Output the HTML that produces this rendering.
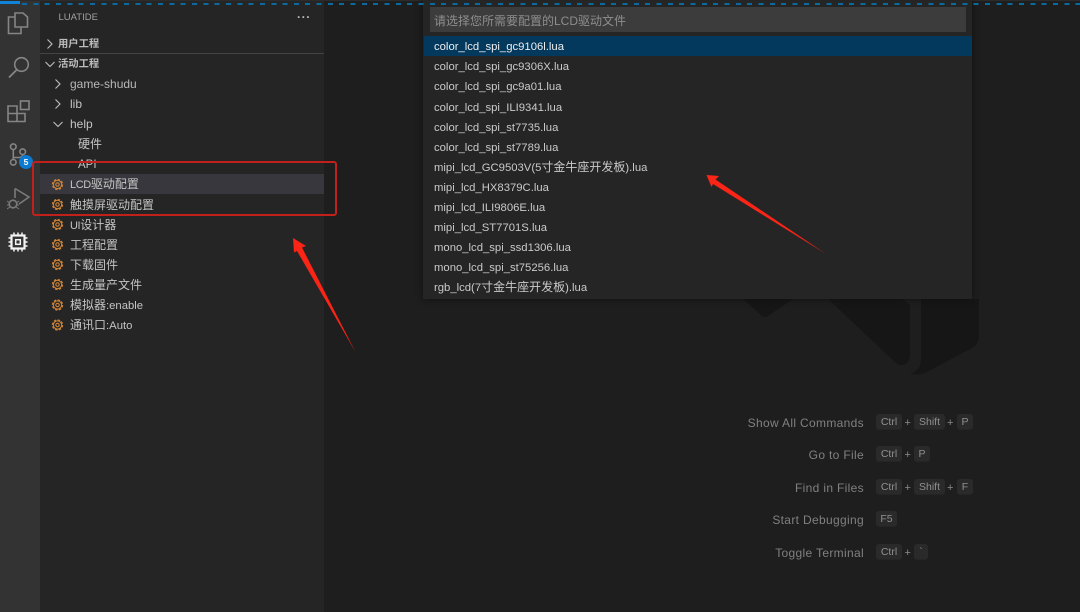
<!DOCTYPE html>
<html><head><meta charset="utf-8">
<style>
html,body{margin:0;padding:0}
body{width:1080px;height:612px;overflow:hidden;background:#1e1e1e;position:relative;font-family:"Liberation Sans","Noto Sans CJK SC",sans-serif;color:#ccc}
#w{position:absolute;left:0;top:0;width:1080px;height:612px;overflow:hidden;filter:blur(.3px)}
.a{position:absolute;white-space:nowrap}
.t{font-size:11.3px;line-height:22px;color:#c4c4c4}
.t i,.q i{font-style:normal;font-size:12px}
.t u{text-decoration:none;font-size:11px;letter-spacing:-.4px}
.q{font-size:11.3px;line-height:22px;color:#cacaca;left:434px}
.l{font-size:12px;line-height:16px;color:#808080;text-align:right;right:216px;letter-spacing:.33px}
.k{font-size:10.5px;line-height:16px;height:16px;background:#2a2a2a;color:#909090;text-align:center;border-radius:3px;box-shadow:inset 0 -1px 0 #252525}
.p{font-size:11px;line-height:16px;color:#8a8a8a}
svg{position:absolute;overflow:visible}
</style></head><body><div id="w">
<div class="a" style="left:0;top:0;width:40px;height:612px;background:#333"></div>
<div class="a" style="left:40px;top:0;width:284px;height:612px;background:#252526"></div>
<div class="a" style="left:0;top:0;width:1080px;height:1px;background:#2b2b2b"></div>

<!-- watermark -->
<svg style="left:0;top:0" width="1080" height="612" fill="#161616">
<path d="M743 299H793L768 316Q765 318 762 316Z"/>
<path d="M828 299L903 299L910 305V356Q908 368 897 364Z"/>
<path d="M920 299H979V336Q979 344 972 348L925 373Q921 375 910 374Q921 370 921 360V299Z"/>
</svg>

<!-- activity icons -->
<svg style="left:0;top:0" width="40" height="260" fill="none" stroke="#858585" stroke-width="1.6">
<path d="M15 13H23L27.500 17V27H15Z"/><path d="M15 17H8.500V33.500H21V27"/>
<circle cx="21.500" cy="64.500" r="6.800"/><path d="M16.500 70L9 77.500" stroke-width="1.900"/>
<path d="M8 106H17V121.500H8ZM8 113.500H25V121.500H17"/><rect x="20.500" y="101" width="8.500" height="8.500"/>
<circle cx="13.300" cy="146.700" r="2.800"/><circle cx="22.700" cy="151.700" r="2.800"/><circle cx="13.300" cy="162.300" r="2.800"/><path d="M13.300 149.500V159.500M13.300 157.500H19Q22.700 157.500 22.700 154.500"/>
<path d="M15 188.500L29 197L19 204M15 188.500V198" stroke="#7a7a7a"/><circle cx="13" cy="204" r="3.800" fill="#333" stroke="#7a7a7a"/><path d="M7 201L10 203M7 205H9.500M7 209L10 207M19 201L16 203M19 205H16.500M19 209L16 207" stroke="#7a7a7a" stroke-width="1"/>
<g stroke="#f4f4f4"><rect x="11.500" y="235.500" width="13" height="13" stroke-width="2.200"/><rect x="15.700" y="239.700" width="4.600" height="4.600" stroke-width="1.500"/><path d="M14 232.500V235M18 232.500V235M22 232.500V235M14 249V251.500M18 249V251.500M22 249V251.500M8.500 238H11.500M8.500 242H11.500M8.500 246H11.500M24.500 238H27.500M24.500 242H27.500M24.500 246H27.500" stroke-width="1.500"/></g>
</svg>
<div class="a" style="left:19px;top:155px;width:14px;height:14px;border-radius:50%;background:#0b7ad1;color:#fff;font-size:8.500px;font-weight:bold;line-height:14px;text-align:center">5</div>

<!-- sidebar -->
<div class="a" style="left:58.500px;top:10px;font-size:9.500px;line-height:16px;color:#a0a0a0">LUATIDE</div>
<div class="a" style="left:297px;top:10px;font-size:12px;line-height:14px;color:#bbb;letter-spacing:.6px;font-weight:bold">···</div>
<div class="a" style="left:40px;top:53px;width:284px;height:1px;background:#444"></div>
<div class="a" style="left:40px;top:174px;width:284px;height:20px;background:#37373d"></div>

<div class="a" style="left:58px;top:35px;font-size:10.300px;line-height:20px;font-weight:bold;color:#bdbdbd">用户工程</div>
<div class="a" style="left:58px;top:55px;font-size:10.300px;line-height:20px;font-weight:bold;color:#bdbdbd">活动工程</div>
<div class="a t" style="left:70px;top:73px;font-size:12px;color:#b8b8b8">game-shudu</div>
<div class="a t" style="left:70px;top:93px;font-size:12px">lib</div>
<div class="a t" style="left:70px;top:113px;font-size:12px">help</div>
<div class="a t" style="left:78px;top:133px"><i>硬件</i></div>
<div class="a t" style="left:78px;top:154px;font-size:11.500px">API</div>
<div class="a t" style="left:70px;top:173px"><u>LCD</u><i>驱动配置</i></div>
<div class="a t" style="left:70px;top:194px"><i>触摸屏驱动配置</i></div>
<div class="a t" style="left:70px;top:214px"><u>UI</u><i>设计器</i></div>
<div class="a t" style="left:70px;top:234px"><i>工程配置</i></div>
<div class="a t" style="left:70px;top:254px"><i>下载固件</i></div>
<div class="a t" style="left:70px;top:274px"><i>生成量产文件</i></div>
<div class="a t" style="left:70px;top:294px"><i>模拟器</i>:enable</div>
<div class="a t" style="left:70px;top:314px"><i>通讯口</i>:Auto</div>

<svg style="left:0;top:0" width="324" height="340" fill="none" stroke="#c0c0c0" stroke-width="1.100">
<path d="M47.500 39.500L52 44L47.500 48.500M45.500 62L50 66.500L54.500 62M55.500 79.500L60 84L55.500 88.500M55.500 99.500L60 104L55.500 108.500M53.500 122L58 126.500L62.500 122"/>
<defs><g id="g"><circle r="4.900" stroke="#cb8238" stroke-width="1.500" stroke-dasharray="2.400 1.450"/><circle r="4.100" stroke="#cb8238" stroke-width="1"/><circle r="1.700" stroke="#cb8238" stroke-width="1.100"/></g></defs>
<use href="#g" x="57.500" y="184.500"/><use href="#g" x="57.500" y="204.500"/><use href="#g" x="57.500" y="224.500"/><use href="#g" x="57.500" y="244.500"/><use href="#g" x="57.500" y="264.500"/><use href="#g" x="57.500" y="284.500"/><use href="#g" x="57.500" y="305"/><use href="#g" x="57.500" y="325"/>
</svg>

<!-- quick pick -->
<div class="a" style="left:423px;top:0;width:549px;height:299px;background:#252526;box-shadow:0 0 6px #111"></div>
<div class="a" style="left:430px;top:7px;width:536px;height:25px;background:#3c3c3c"></div>
<div class="a" style="left:434px;top:11px;font-size:12px;line-height:20px;color:#8e8e8e">请选择您所需要配置的LCD驱动文件</div>
<div class="a" style="left:424px;top:36px;width:548px;height:20px;background:#04395e"></div>
<div class="a q" style="top:36px;color:#eee">color_lcd_spi_gc9106l.lua</div>
<div class="a q" style="top:56px">color_lcd_spi_gc9306X.lua</div>
<div class="a q" style="top:76px">color_lcd_spi_gc9a01.lua</div>
<div class="a q" style="top:97px">color_lcd_spi_ILI9341.lua</div>
<div class="a q" style="top:117px">color_lcd_spi_st7735.lua</div>
<div class="a q" style="top:137px">color_lcd_spi_st7789.lua</div>
<div class="a q" style="top:156px">mipi_lcd_GC9503V(5<i>寸金牛座开发板</i>).lua</div>
<div class="a q" style="top:177px">mipi_lcd_HX8379C.lua</div>
<div class="a q" style="top:197px">mipi_lcd_ILI9806E.lua</div>
<div class="a q" style="top:217px">mipi_lcd_ST7701S.lua</div>
<div class="a q" style="top:237px">mono_lcd_spi_ssd1306.lua</div>
<div class="a q" style="top:257px">mono_lcd_spi_st75256.lua</div>
<div class="a q" style="top:276px">rgb_lcd(7<i>寸金牛座开发板</i>).lua</div>

<!-- progress -->
<div class="a" style="left:0;top:1px;width:20px;height:3px;background:#0e83d8"></div>
<div class="a" style="left:22px;top:3px;width:1058px;height:2px;background:repeating-linear-gradient(90deg,#0a6a9e 0 5px,transparent 5px 11.330px)"></div>

<!-- shortcuts -->
<div class="a l" style="top:415px">Show All Commands</div>
<div class="a l" style="top:447px">Go to File</div>
<div class="a l" style="top:480px">Find in Files</div>
<div class="a l" style="top:512px">Start Debugging</div>
<div class="a l" style="top:545px">Toggle Terminal</div>

<div class="a k" style="left:876px;top:414px;width:26px">Ctrl</div><div class="a p" style="left:904.500px;top:415px">+</div><div class="a k" style="left:914px;top:414px;width:31px">Shift</div><div class="a p" style="left:947px;top:415px">+</div><div class="a k" style="left:957px;top:414px;width:16px">P</div>
<div class="a k" style="left:876px;top:446px;width:26px">Ctrl</div><div class="a p" style="left:904.500px;top:447px">+</div><div class="a k" style="left:914px;top:446px;width:16px">P</div>
<div class="a k" style="left:876px;top:479px;width:26px">Ctrl</div><div class="a p" style="left:904.500px;top:480px">+</div><div class="a k" style="left:914px;top:479px;width:31px">Shift</div><div class="a p" style="left:947px;top:480px">+</div><div class="a k" style="left:957px;top:479px;width:16px">F</div>
<div class="a k" style="left:876px;top:511px;width:21px">F5</div>
<div class="a k" style="left:876px;top:544px;width:26px">Ctrl</div><div class="a p" style="left:904.500px;top:545px">+</div><div class="a k" style="left:914px;top:544px;width:14px">`</div>

<!-- annotations -->
<div class="a" style="left:32px;top:161px;width:301px;height:51px;border:2px solid #c2201c;border-radius:3px"></div>
<svg style="left:0;top:0" width="1080" height="612" fill="#fa2417">
<path d="M293 238L306 246L302 247.500L355.500 352L297 251L294 252.500Z"/>
<path d="M706.500 175L719 176L715.500 179.500L826 254L713 184L711.500 187Z"/>
</svg>
</div></body></html>
